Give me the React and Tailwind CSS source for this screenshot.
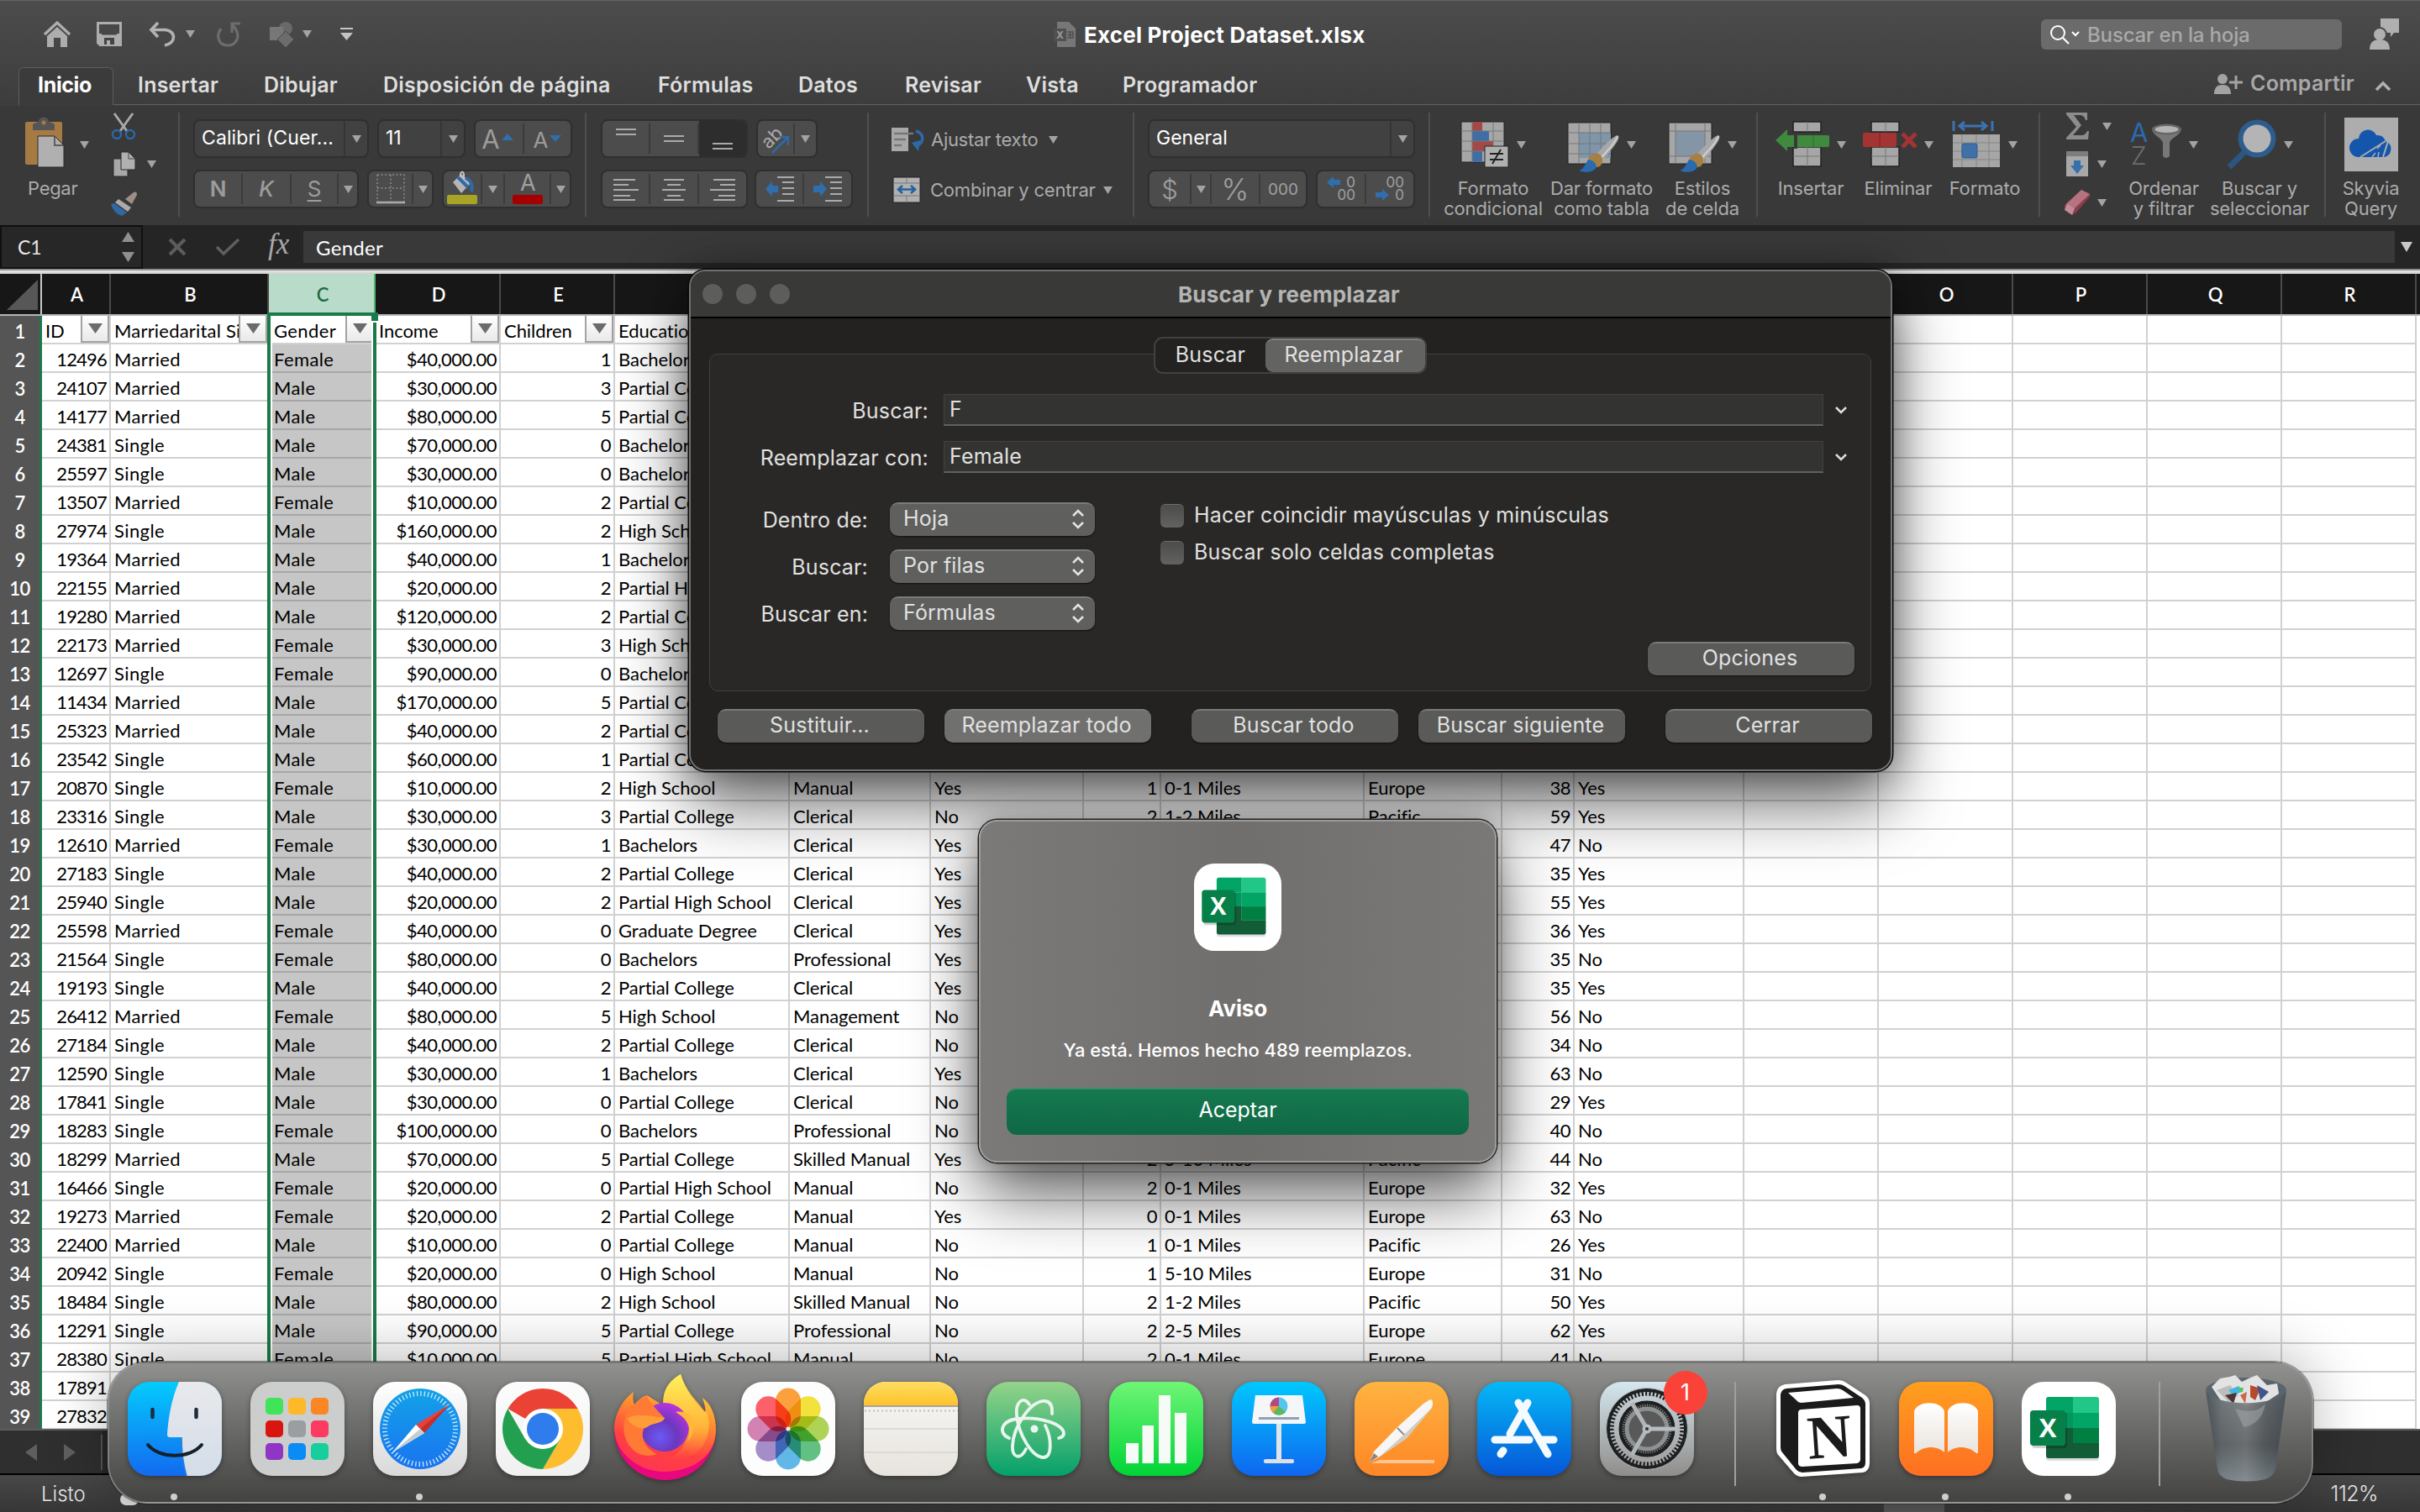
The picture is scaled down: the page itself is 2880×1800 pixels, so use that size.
import React from "react";

const COLS = [
  ["A", "w-[82px]"],
  ["B", "w-[188px]"],
  ["C", "w-[127px]"],
  ["D", "w-[149px]"],
  ["E", "w-[136px]"],
  ["F", "w-[208px]"],
  ["G", "w-[168px]"],
  ["H", "w-[182px]"],
  ["I", "w-[92px]"],
  ["J", "w-[242px]"],
  ["K", "w-[164px]"],
  ["L", "w-[86px]"],
  ["M", "w-[202px]"],
  ["N", "w-[160px]"],
  ["O", "w-[160px]"],
  ["P", "w-[160px]"],
  ["Q", "w-[160px]"],
  ["R", "w-[160px]"],
];
const RIGHT = new Set([0, 3, 4, 8, 11]);
const FILTERED = new Set([0, 1, 2, 3, 4]);

const DATA = `ID|Marriedarital Si|Gender|Income|Children|Educatio
12496|Married|Female|$40,000.00|1|Bachelors
24107|Married|Male|$30,000.00|3|Partial College
14177|Married|Male|$80,000.00|5|Partial College
24381|Single|Male|$70,000.00|0|Bachelors
25597|Single|Male|$30,000.00|0|Bachelors
13507|Married|Female|$10,000.00|2|Partial College
27974|Single|Male|$160,000.00|2|High School
19364|Married|Male|$40,000.00|1|Bachelors
22155|Married|Male|$20,000.00|2|Partial High School
19280|Married|Male|$120,000.00|2|Partial College
22173|Married|Female|$30,000.00|3|High School
12697|Single|Female|$90,000.00|0|Bachelors
11434|Married|Male|$170,000.00|5|Partial College
25323|Married|Male|$40,000.00|2|Partial College
23542|Single|Male|$60,000.00|1|Partial College
20870|Single|Female|$10,000.00|2|High School|Manual|Yes|1|0-1 Miles|Europe|38|Yes
23316|Single|Male|$30,000.00|3|Partial College|Clerical|No|2|1-2 Miles|Pacific|59|Yes
12610|Married|Female|$30,000.00|1|Bachelors|Clerical|Yes||||47|No
27183|Single|Male|$40,000.00|2|Partial College|Clerical|Yes||||35|Yes
25940|Single|Male|$20,000.00|2|Partial High School|Clerical|Yes||||55|Yes
25598|Married|Female|$40,000.00|0|Graduate Degree|Clerical|Yes||||36|Yes
21564|Single|Female|$80,000.00|0|Bachelors|Professional|Yes||||35|No
19193|Single|Male|$40,000.00|2|Partial College|Clerical|Yes||||35|Yes
26412|Married|Female|$80,000.00|5|High School|Management|No||||56|No
27184|Single|Male|$40,000.00|2|Partial College|Clerical|No||||34|No
12590|Single|Male|$30,000.00|1|Bachelors|Clerical|Yes||||63|No
17841|Single|Male|$30,000.00|0|Partial College|Clerical|No||||29|Yes
18283|Single|Female|$100,000.00|0|Bachelors|Professional|No||||40|No
18299|Married|Male|$70,000.00|5|Partial College|Skilled Manual|Yes|2|5-10 Miles|Pacific|44|No
16466|Single|Female|$20,000.00|0|Partial High School|Manual|No|2|0-1 Miles|Europe|32|Yes
19273|Married|Female|$20,000.00|2|Partial College|Manual|Yes|0|0-1 Miles|Europe|63|No
22400|Married|Male|$10,000.00|0|Partial College|Manual|No|1|0-1 Miles|Pacific|26|Yes
20942|Single|Female|$20,000.00|0|High School|Manual|No|1|5-10 Miles|Europe|31|No
18484|Single|Male|$80,000.00|2|High School|Skilled Manual|No|2|1-2 Miles|Pacific|50|Yes
12291|Single|Male|$90,000.00|5|Partial College|Professional|No|2|2-5 Miles|Europe|62|Yes
28380|Single|Female|$10,000.00|5|Partial High School|Manual|No|2|0-1 Miles|Europe|41|No
17891
27832`
  .split("\n")
  .map((l) => l.split("|"));

const Svg = ({ w, h, children, className = "" }) => (
  <svg width={w} height={h} viewBox={`0 0 ${w} ${h}`} className={`block shrink-0 overflow-visible ${className}`} fill="none">
    {children}
  </svg>
);
const Caret = ({ className = "", fill = "#a3a3a3" }) => (
  <Svg w={11} h={9} className={className}>
    <path d="M0 0H11L5.5 9Z" fill={fill} />
  </Svg>
);

/* ---------- title bar ---------- */
function TitleBar() {
  return (
    <header className="h-[125px] shrink-0 bg-linear-to-b from-[#4c4c4c] to-[#3d3d3d] border-t border-[#636363] flex flex-col">
      <div className="h-[79px] flex items-center shrink-0">
        <div className="w-[1254px] pl-[52px] flex items-center shrink-0">
          <Svg w={32} h={32}>
            <path d="M1 16L16 2L31 16" stroke="#adadad" strokeWidth="3.4" />
            <path d="M4 18L16 7L28 18V31H20V20H12V31H4Z" fill="#adadad" />
          </Svg>
          <Svg w={30} h={29} className="ml-[31px]">
            <path d="M1.5 1.5H28.5V27.5H4L1.5 25Z" stroke="#adadad" strokeWidth="3" />
            <path d="M2 14H28V28H4L2 26Z" fill="#adadad" />
            <path d="M9 27V19H21V27H16V22H12V27Z" fill="#444" />
            <path d="M6 14H24V15.5H6Z" fill="#444" />
          </Svg>
          <Svg w={33} h={30} className="ml-[32px]">
            <path d="M11 1L3 9.500L11 18M3 9.500H19C33 10 33 26 19 28" stroke="#b2b2b2" strokeWidth="3.6" />
          </Svg>
          <Caret className="ml-[11px]" />
          <Svg w={30} h={30} className="ml-[25px]">
            <path d="M6 8C-1 18 4 28 14 28C25 28 29 17 23 8L20 4M19 13V2H29" stroke="#6d6d6d" strokeWidth="3.2" />
          </Svg>
          <Svg w={30} h={30} className="ml-[34px]">
            <circle cx="19" cy="8" r="8" fill="#696969" />
            <path d="M0 6H16V22H0Z" fill="#777" />
            <path d="M19 11L29 21L19 31L9 21Z" fill="#6c6c6c" stroke="#444" />
          </Svg>
          <Caret className="ml-[9px]" />
          <Svg w={15} h={15} className="ml-[34px]">
            <path d="M0 1H15" stroke="#c4c4c4" strokeWidth="2" />
            <path d="M0 6H15L7.500 15Z" fill="#c4c4c4" />
          </Svg>
        </div>
        <div className="w-[1175px] flex items-center shrink-0">
          <Svg w={28} h={30}>
            <path d="M4 0H18L26 8V30H4Z" fill="#777" />
            <path d="M0 8H15V23H0Z" fill="#505050" />
            <text x="3" y="20" fontSize="12" fontWeight="700" fill="#999" fontFamily="Inter">X</text>
            <path d="M16 12H23V19H16M16 15.500H23M19.500 12V19" stroke="#505050" strokeWidth="1.500" />
          </Svg>
          <span className="ml-[8px] mt-[2px] text-[26px] font-bold text-white tracking-[0.2px] whitespace-nowrap">Excel Project Dataset.xlsx</span>
        </div>
        <div className="w-[358px] h-9 rounded-md bg-[#6b6b6b] flex items-center shrink-0 pl-[10px]">
          <Svg w={24} h={24}>
            <circle cx="10" cy="10" r="8" stroke="#fff" strokeWidth="2" />
            <path d="M16 16L23 23" stroke="#fff" strokeWidth="2.200" />
          </Svg>
          <Svg w={10} h={7} className="ml-[2px]">
            <path d="M1 1L5 5L9 1" stroke="#fff" strokeWidth="2" />
          </Svg>
          <span className="ml-[9px] mt-[2px] text-[24px] font-medium text-[#a9a9a9] tracking-[-0.15px] whitespace-nowrap">Buscar en la hoja</span>
        </div>
        <Svg w={35} h={37} className="ml-[33px]">
          <path d="M13 0H35V17H29L25 22V17H13Z" fill="#b0b0b0" />
          <circle cx="12" cy="19" r="8" fill="#b0b0b0" stroke="#474747" strokeWidth="2" />
          <path d="M0 37C0 29 4 25 12 25C20 25 24 29 24 37Z" fill="#b0b0b0" />
        </Svg>
      </div>
      <nav className="h-[45px] shrink-0 flex items-stretch pl-[22px] text-[25px] font-semibold text-[#dedede] whitespace-nowrap">
        <div className="w-[113px] -mb-px pb-[3px] pr-[3px] rounded-t-md border border-b-0 border-[#5c5c5c] bg-[#3b3b3b] flex justify-center items-center text-white font-bold tracking-[-0.4px]">Inicio</div>
        <div className="flex items-center gap-[55px] pl-[29px] border-b border-[#606060] grow tracking-[0.22px]">
          <span className="w-[95px]">Insertar</span>
          <span className="w-[87px]">Dibujar</span>
          <span className="w-[272px]">Disposición de página</span>
          <span className="w-[112px]">Fórmulas</span>
          <span className="w-[72px]">Datos</span>
          <span className="w-[89px]">Revisar</span>
          <span className="w-[60px]">Vista</span>
          <span className="w-[162px]">Programador</span>
          <div className="ml-auto mr-[34px] flex items-center text-[#a8a8a8] mb-1">
            <Svg w={34} h={24}>
              <circle cx="10" cy="6" r="6" fill="#a3a3a3" />
              <path d="M0 24C0 16 4 13 10 13C16 13 20 16 20 24ZM24.500 2H27.500V8.500H34V11.500H27.500V18H24.500V11.500H18V8.500H24.500Z" fill="#a3a3a3" />
            </Svg>
            <span className="w-[124px] ml-[9px]">Compartir</span>
            <Svg w={20} h={12} className="ml-[24px] mt-1">
              <path d="M2 11L10 3L18 11" stroke="#b0b0b0" strokeWidth="3.500" />
            </Svg>
          </div>
        </div>
      </nav>
    </header>
  );
}

/* ---------- ribbon ---------- */
const Box = ({ w, children, dark }) => (
  <div className={`${w} ${dark ? "bg-[#414141]" : "bg-[#4c4c4c]"} h-[46px] shrink-0 rounded-lg border-2 border-[#2f2f2f] flex items-stretch`}>
    {children}
  </div>
);
const Seg = ({ w, children, last, active }) => (
  <div className={`${w} ${active ? "bg-[#2d2d2d] rounded-r-md" : ""} flex items-center shrink-0`}>
    <div className="flex-1 flex items-center justify-center leading-none">{children}</div>
    {!last && <div className="w-[2px] h-9 bg-[#3b3b3b]" />}
  </div>
);
const Group = ({ w, children, last }) => (
  <div className={`${w} h-[142px] shrink-0 flex`}>
    <div className="flex grow min-w-0">{children}</div>
    {!last && <div className="w-[2px] h-[124px] mt-[8px] bg-[#4f4f4f] shrink-0" />}
  </div>
);
const Big = ({ w, icon, a, b, noCaret }) => (
  <div className={`${w} shrink-0 flex flex-col items-center pt-[11px]`}>
    <div className="h-[70px] flex items-center gap-[9px]">
      {icon}
      {!noCaret && <Caret />}
    </div>
    <div className="mt-[5px] text-center text-[22px] leading-6 text-[#ababab] tracking-[-0.15px] whitespace-nowrap">
      <div>{a}</div>
      <div>{b}</div>
    </div>
  </div>
);

const HLines = ({ rows, h = 32 }) => (
  <Svg w={30} h={h}>
    {rows.map(([x, w, y], i) => (
      <rect key={i} x={x} y={y} width={w} height="2" fill="#aaa" />
    ))}
  </Svg>
);
const Brush = () => (
  <g>
    <path d="M60 17C64 19 60 26 42 47L34 40C44 29 55 18 60 17Z" fill="#a8a8a8" />
    <path d="M60 18C58 24 48 36 39 45" stroke="#d0d0d0" strokeWidth="2" />
    <path d="M33 39C38 37 43 43 42 48C41 55 36 56 32 54L25 47C26 43 29 40 33 39Z" fill="#a87f42" />
    <path d="M25 46C30 46 35 50 35 55C31 62 21 62 14 59C20 58 22 50 25 46Z" fill="#2a6aad" />
  </g>
);
const GridIcon = ({ fill }) => (
  <g>
    <path d="M1 2H52V51H1Z" fill="#a6a6a6" stroke="#222" />
    {fill}
  </g>
);

function Ribbon() {
  return (
    <section className="h-[143px] shrink-0 bg-[#393939] border-t border-[#3d3d3d] flex">
      <Group w="w-[214px]">
        <div className="w-[125px] pt-[14px] pl-[30px] shrink-0">
          <div className="flex items-center">
            <Svg w={48} h={60}>
              <path d="M2 5H42Q44 5 44 7V56H2Q0 56 0 54V7Q0 5 2 5Z" fill="#a57b43" />
              <path d="M9 15V8Q12 6 16 5C16 -2 28 -2 28 5Q32 6 35 8V15Z" fill="#555" />
              <circle cx="22" cy="6" r="2.500" fill="#a57b43" />
              <path d="M15 22H35L46 33V59H15Z" fill="#b0b0b0" stroke="#2a2a2a" />
              <path d="M35 22V33H46" stroke="#444" strokeWidth="1.500" />
            </Svg>
            <Caret className="ml-[17px] mt-1" />
          </div>
          <div className="mt-[12px] ml-[3px] text-[22px] leading-6 text-[#ababab] tracking-[-0.3px]">Pegar</div>
        </div>
        <div className="pt-[8px] pl-[7px] flex flex-col">
          <Svg w={30} h={32}>
            <path d="M4 1L19 22M26 1L11 22" stroke="#a8a8a8" strokeWidth="3" />
            <circle cx="7" cy="26" r="5" stroke="#2b67a8" strokeWidth="2.400" />
            <circle cx="23" cy="26" r="5" stroke="#2b67a8" strokeWidth="2.400" />
          </Svg>
          <div className="flex items-center mt-[14px]">
            <Svg w={30} h={31} className="ml-[2px]">
              <path d="M1 9H18V30H1Z" fill="#a8a8a8" stroke="#2a2a2a" />
              <path d="M10 1H19L27 9V22H10Z" fill="#b0b0b0" stroke="#2a2a2a" />
              <path d="M19 1V9H27" stroke="#444" />
            </Svg>
            <Caret className="ml-[11px]" />
          </div>
          <Svg w={32} h={30} className="mt-[17px]">
            <path d="M17 9L27 1Q31 -1 31 4L25 15Z" fill="#9d8f86" />
            <path d="M9 9L24 19L20 24L5 13Z" fill="#aaa" />
            <path d="M4 14L19 25L13 29Q4 27 0 15Z" fill="#2f68a3" />
          </Svg>
        </div>
      </Group>
      <Group w="w-[484px]">
        <div className="pl-[16px] pt-[16px] flex flex-col gap-[14px] text-[#9c9c9c] text-[26px]">
          <div className="flex gap-[10px]">
            <Box w="w-[209px]" dark>
              <div className="w-[177px] flex items-center pl-[8px] pb-[2px] text-white text-[23px] tracking-[0.1px] whitespace-nowrap">Calibri (Cuer...</div>
              <div className="w-[2px] bg-[#353535]" />
              <Caret className="m-auto" />
            </Box>
            <Box w="w-[105px]" dark>
              <div className="w-[73px] flex items-center pl-[8px] pb-[2px] text-white text-[23px]">11</div>
              <div className="w-[2px] bg-[#353535]" />
              <Caret className="m-auto" />
            </Box>
            <Box w="w-[117px]">
              <Seg w="w-[58px]">
                <span className="text-[31px] mr-[2px] -ml-1">A</span>
                <Svg w={14} h={8} className="mb-1"><path d="M0 8H14L7 0Z" fill="#2f6fae" /></Svg>
              </Seg>
              <Seg w="w-[55px]" last>
                <span className="text-[26px] mt-1 mr-[2px]">A</span>
                <Svg w={14} h={8}><path d="M0 0H14L7 8Z" fill="#2f6fae" /></Svg>
              </Seg>
            </Box>
          </div>
          <div className="flex gap-[10px]">
            <Box w="w-[197px]">
              <Seg w="w-[57px]"><span className="font-semibold">N</span></Seg>
              <Seg w="w-[58px]"><span className="italic font-medium">K</span></Seg>
              <Seg w="w-[56px]"><span className="underline decoration-2 underline-offset-4">S</span></Seg>
              <Seg w="w-[22px]" last><Caret /></Seg>
            </Box>
            <Box w="w-[79px]">
              <Seg w="w-[53px]">
                <Svg w={34} h={36}>
                  <path d="M1 1H33V33M1 1V33M17 1V33M1 17H33" stroke="#8a8a8a" strokeWidth="1.500" strokeDasharray="2 2.500" />
                  <path d="M0 34H34" stroke="#aaa" strokeWidth="2.500" />
                </Svg>
              </Seg>
              <Seg w="w-[22px]" last><Caret /></Seg>
            </Box>
            <Box w="w-[154px]">
              <Seg w="w-[46px]">
                <Svg w={36} h={36}>
                  <path d="M7 10L17 0L28 11L17 23Z" fill="#b5b5b5" />
                  <path d="M16 11V0Q18 -5 20 0V6" stroke="#c4c4c4" strokeWidth="2" />
                  <path d="M13 4L25 16M22 5Q32 9 29 21" stroke="#2e6aa8" strokeWidth="4" />
                  <rect x="0" y="25" width="36" height="11" rx="2" fill="#a7a426" />
                </Svg>
              </Seg>
              <Seg w="w-[27px]"><Caret /></Seg>
              <Seg w="w-[55px]">
                <Svg w={36} h={36}>
                  <text x="9" y="20" fontSize="27" fill="#a0a0a0" fontFamily="Inter">A</text>
                  <rect x="0" y="25" width="36" height="11" rx="2" fill="#a40000" />
                </Svg>
              </Seg>
              <Seg w="w-[22px]" last><Caret /></Seg>
            </Box>
          </div>
        </div>
      </Group>
      <Group w="w-[336px]">
        <div className="pl-[17px] pt-[16px] flex flex-col gap-[14px]">
          <div className="flex gap-[10px]">
            <Box w="w-[175px]">
              <Seg w="w-[57px]"><HLines rows={[[3, 24, 4], [3, 24, 10]]} /></Seg>
              <Seg w="w-[58px]"><HLines rows={[[3, 24, 12], [3, 24, 18]]} /></Seg>
              <Seg w="w-[56px]" last active><div className="h-[42px] flex items-center"><HLines rows={[[3, 24, 21], [3, 24, 27]]} /></div></Seg>
            </Box>
            <Box w="w-[73px]">
              <Seg w="w-[44px]">
                <Svg w={36} h={36}>
                  <text x="3" y="25" fontSize="22" fill="#aaa" fontFamily="Inter" transform="rotate(-45 14 20)">ab</text>
                  <path d="M14 35L32 17M23 16H33V26" stroke="#2e6aa8" strokeWidth="2.500" />
                </Svg>
              </Seg>
              <Seg w="w-[25px]" last><Caret /></Seg>
            </Box>
          </div>
          <div className="flex gap-[8px]">
            <Box w="w-[175px]">
              <Seg w="w-[57px]"><HLines rows={[[0, 26, 6], [0, 18, 12], [0, 30, 18], [0, 20, 25], [0, 26, 30]]} h={36} /></Seg>
              <Seg w="w-[58px]"><HLines rows={[[3, 24, 6], [7, 16, 12], [1, 28, 18], [7, 16, 25], [3, 24, 30]]} h={36} /></Seg>
              <Seg w="w-[56px]" last><HLines rows={[[4, 26, 6], [12, 18, 12], [0, 30, 18], [10, 20, 25], [4, 26, 30]]} h={36} /></Seg>
            </Box>
            <Box w="w-[117px]">
              <Seg w="w-[57px]">
                <Svg w={34} h={36}>
                  <path d="M0 18L8 9V14H15V22H8V27Z" fill="#2f6fae" />
                  <path d="M14 4H34M20 10H34M20 17H34M20 24H34M14 32H34" stroke="#aaa" strokeWidth="2" />
                </Svg>
              </Seg>
              <Seg w="w-[56px]" last>
                <Svg w={34} h={36}>
                  <path d="M16 18L8 9V14H0V22H8V27Z" fill="#2f6fae" />
                  <path d="M14 4H34M20 10H34M20 17H34M20 24H34M14 32H34" stroke="#aaa" strokeWidth="2" />
                </Svg>
              </Seg>
            </Box>
          </div>
        </div>
      </Group>
      <Group w="w-[316px]">
        <div className="pl-[27px] pt-[17px] flex flex-col gap-[14px] text-[22px] text-[#ababab] whitespace-nowrap">
          <div className="h-[46px] flex items-center">
            <Svg w={40} h={30}>
              <path d="M0 1H20V29H0Z" fill="#a8a8a8" />
              <path d="M3 8H26M3 15H17M3 22H12" stroke="#777" strokeWidth="2.500" />
              <path d="M29 5C39 8 39 18 31 22" stroke="#2e6aa8" strokeWidth="3.500" />
              <path d="M24 19L34 16L32 29Z" fill="#2e6aa8" />
            </Svg>
            <span className="w-[127px] ml-[7px] tracking-[-0.3px]">Ajustar texto</span>
            <Caret className="ml-[13px]" />
          </div>
          <div className="h-[46px] flex items-center">
            <Svg w={34} h={32} className="ml-[1px]">
              <path d="M1 1H33V31H1Z" fill="#b0b0b0" stroke="#222" />
              <path d="M1 8H33M1 23H33M17 1V8M17 23V31" stroke="#777" />
              <path d="M9 15.500H25M12 11L7 15.500L12 20M22 11L27 15.500L22 20" stroke="#25619e" strokeWidth="2.600" />
            </Svg>
            <span className="w-[193px] ml-[11px] tracking-[-0.2px]">Combinar y centrar</span>
            <Caret className="ml-[13px]" />
          </div>
        </div>
      </Group>
      <Group w="w-[352px]">
        <div className="pl-[16px] pt-[16px] flex flex-col gap-[14px] text-[#a0a0a0]">
          <Box w="w-[318px]" dark>
            <div className="w-[286px] flex items-center pl-[8px] pb-[2px] text-white text-[23px]">General</div>
            <div className="w-[2px] bg-[#353535]" />
            <Caret className="m-auto" />
          </Box>
          <div className="flex gap-[10px]">
            <Box w="w-[190px]">
              <Seg w="w-[50px]"><span className="text-[31px] font-light">$</span></Seg>
              <Seg w="w-[24px]"><Caret /></Seg>
              <Seg w="w-[58px]"><span className="text-[35px] font-light">%</span></Seg>
              <Seg w="w-[54px]" last><span className="text-[19px]">000</span></Seg>
            </Box>
            <Box w="w-[118px]">
              <Seg w="w-[58px]">
                <div className="w-[34px] text-[17px] leading-[15px] flex flex-col items-end">
                  <div className="w-full flex justify-between"><Svg w={16} h={14}><path d="M0 7L8 0V4H16V10H8V14Z" fill="#2f6fae" /></Svg>0</div>
                  <div>00</div>
                </div>
              </Seg>
              <Seg w="w-[56px]" last>
                <div className="w-[34px] text-[17px] leading-[15px] flex flex-col items-end">
                  <div>00</div>
                  <div className="w-full flex justify-between"><Svg w={16} h={14}><path d="M16 7L8 0V4H0V10H8V14Z" fill="#2f6fae" /></Svg>0</div>
                </div>
              </Seg>
            </Box>
          </div>
        </div>
      </Group>
      <Group w="w-[390px]">
        <div className="flex pl-[11px]">
          <Big w="w-[128px]" a="Formato" b="condicional" icon={
            <Svg w={58} h={56}>
              <path d="M1 1H52V49H1Z" fill="#a6a6a6" stroke="#222" />
              <path d="M14 1H26V12H14ZM14 24H39V36H14Z" fill="#a34a48" />
              <path d="M14 12H34V24H14ZM14 36H26V49H14Z" fill="#3f6ea6" />
              <path d="M1 12H52M1 24H52M1 36H52M14 1V49M39 1V36" stroke="#777" strokeWidth="1" />
              <path d="M29 30H57V55H29Z" fill="#b0b0b0" stroke="#222" />
              <path d="M35 39H51M35 46H51M48 34L38 51" stroke="#222" strokeWidth="2" />
            </Svg>} />
          <Big w="w-[130px]" a="Dar formato" b="como tabla" icon={
            <Svg w={62} h={56}>
              <GridIcon fill={<><path d="M14 14H52V44H14Z" fill="#7f95a9" /><path d="M1 14H52M1 27H52M1 39H52M14 2V51M27 2V51M40 2V51" stroke="#777" /></>} />
              <Brush />
            </Svg>} />
          <Big w="w-[110px]" a="Estilos" b="de celda" icon={
            <Svg w={62} h={56}>
              <GridIcon fill={<><path d="M9 12H44V42H9Z" fill="#8496a6" /><path d="M1 12H52M1 42H52M9 2V51M44 2V51" stroke="#777" /></>} />
              <Brush />
            </Svg>} />
        </div>
      </Group>
      <Group w="w-[336px]">
        <div className="flex pl-[11px]">
          <Big w="w-[104px]" a="Insertar" icon={
            <Svg w={64} h={56}>
              <path d="M21 1H54V13H21ZM21 31H54V54H21Z" fill="#a6a6a6" stroke="#222" strokeWidth="1.500" />
              <path d="M38 1V13M38 31V54M21 42H54" stroke="#777" />
              <path d="M0 23L14 10V17H62Q64 17 64 19V29Q64 31 62 31H14V36Z" fill="#3f8a3f" />
              <path d="M24 14V33" stroke="#393939" strokeWidth="4" /><path d="M45 17V31" stroke="#2f6e30" />
            </Svg>} />
          <Big w="w-[104px]" a="Eliminar" icon={
            <Svg w={64} h={56}>
              <path d="M10 1H43V13H10ZM10 31H43V54H10Z" fill="#a6a6a6" stroke="#222" strokeWidth="1.500" />
              <path d="M27 1V13M27 31V54M10 42H43" stroke="#777" />
              <rect x="0" y="14" width="40" height="17" rx="2" fill="#a33433" />
              <path d="M20 14V31" stroke="#7d2423" />
              <path d="M47 15L63 31M63 15L47 31" stroke="#a33433" strokeWidth="5" />
            </Svg>} />
          <Big w="w-[102px]" a="Formato" icon={
            <Svg w={58} h={56}>
              <path d="M2 0V12M48 0V12M10 6H40M15 1L9 6L15 11M35 1L41 6L35 11" stroke="#3a74b0" strokeWidth="3" />
              <path d="M1 16H57V55H1Z" fill="#a6a6a6" />
              <path d="M1 26H57M1 36H57M1 46H57M12 16V55M29 16V55M44 16V55" stroke="#858585" />
              <rect x="12" y="27" width="18" height="17" rx="2" fill="#3f70a8" stroke="#2f5d91" />
            </Svg>} />
        </div>
      </Group>
      <Group w="w-[340px]">
        <div className="w-[93px] shrink-0 pl-[31px] pt-[8px] flex flex-col">
          <div className="flex items-start">
            <Svg w={28} h={33}>
              <path d="M0 0H25V9H23Q22 4 17 3H9L18 15L8 27H18Q23 27 25 22H27L26 32H0V30L12 17L0 2Z" fill="#8c8c8c" />
            </Svg>
            <Caret className="ml-[15px] mt-[12px]" />
          </div>
          <div className="flex items-center mt-[13px]">
            <Svg w={27} h={31}>
              <path d="M0 0H26V30H0Z" fill="#a8a8a8" /><path d="M0 0H26V6H0Z" fill="#7d7d7d" />
              <path d="M9 11H17V17H21L13 27L5 17H9Z" fill="#3a70a9" />
            </Svg>
            <Caret className="ml-[10px]" />
          </div>
          <div className="flex items-center mt-[14px] -ml-[3px]">
            <Svg w={32} h={32}>
              <path d="M21 1L31 6Q32 7 31 9L15 28L10 31L1 24V19Z" fill="#8d3c50" />
              <path d="M21 1L31 6L13 23L4 17Z" fill="#b5727f" />
              <path d="M4 17L13 23L10 31L1 25Z" fill="#c08c96" />
            </Svg>
            <Caret className="ml-[8px]" />
          </div>
        </div>
        <Big w="w-[108px]" a="Ordenar" b="y filtrar" icon={
          <Svg w={61} h={52}>
            <path d="M26 7C26 15 38 18 39 24V40Q43 44 47 40V24C48 18 61 15 61 7Z" fill="#777" />
            <ellipse cx="43.500" cy="8" rx="17.500" ry="6.500" fill="#666" />
            <ellipse cx="43.500" cy="8" rx="14" ry="4" fill="#b4b4b4" />
            <text x="0" y="23" fontSize="31" fill="#2a6bb0" fontFamily="Inter">A</text>
            <text x="1" y="50" fontSize="30" fill="#6c6c6c" fontFamily="Inter" fontWeight="300">Z</text>
          </Svg>} />
        <Big w="w-[120px]" a="Buscar y" b="seleccionar" icon={
          <Svg w={59} h={60}>
            <circle cx="36" cy="23" r="19.500" fill="#b4b4b4" stroke="#2c5d8e" strokeWidth="6" />
            <path d="M22 38L3 57" stroke="#2c5580" strokeWidth="7" />
          </Svg>} />
      </Group>
      <Group w="w-[112px]" last>
        <Big noCaret w="w-[107px]" a="Skyvia" b="Query" icon={
          <Svg w={64} h={64}>
            <path d="M0 0H64V64H0Z" fill="#adadad" />
            <path d="M17 47A11 11 0 0 1 17 25A11 11 0 0 1 38 21Q46 20 49 28A10 10 0 0 1 48 47Z" fill="#1556ad" />
            <path d="M19 47L49 28M46 47L52 28" stroke="#adadad" strokeWidth="2" />
            <path d="M33 47L37 42M39 37L43 33M40 47L41 41" stroke="#adadad" strokeWidth="1.500" />
          </Svg>} />
      </Group>
    </section>
  );
}

function FormulaBar() {
  return (
    <section className="h-[52px] shrink-0 bg-[#252525] flex items-center">
      <div className="w-[170px] h-full border-2 border-[#101010] bg-[#272727] flex items-center justify-between pl-[19px] pr-[8px] font-['Lato',sans-serif]">
        <span className="text-[23px] text-[#e8e8e8]">C1</span>
        <Svg w={15} h={36}>
          <path d="M0 12H15L7.500 0ZM0 24H15L7.500 36Z" fill="#8f8f8f" />
        </Svg>
      </div>
      <Svg w={22} h={20} className="ml-[30px]">
        <path d="M2 1L20 19M20 1L2 19" stroke="#5c5c5c" strokeWidth="4" />
      </Svg>
      <Svg w={30} h={20} className="ml-[34px]">
        <path d="M2 10L10 18L28 1" stroke="#5f5f5f" strokeWidth="3.500" />
      </Svg>
      <span className="w-[43px] pl-[1px] ml-[32px] -mt-[6px] font-['Liberation_Serif',serif] italic text-[35px] leading-[40px] text-[#a8a8a8]">fx</span>
      <div className="w-[2489px] h-[38px] bg-[#393939] pl-[15px] pt-[2px] flex items-center font-['Lato',sans-serif] text-[24px] tracking-[0.3px] text-white">Gender</div>
      <Svg w={14} h={12} className="ml-[7px]"><path d="M0 0H14L7 12Z" fill="#c9c9c9" /></Svg>
    </section>
  );
}

/* ---------- sheet ---------- */
function Filter() {
  return (
    <div className="absolute right-0 top-0 w-[34px] h-[32px] bg-linear-to-b from-white to-[#e9e9e9] border-2 border-t-0 border-[#a2a2a2] flex items-center justify-center">
      <Svg w={17} h={12}><path d="M0 0H17L8.500 12Z" fill="#6b6b6b" /></Svg>
    </div>
  );
}

const cellText = (r, i) => {
  if (r > 0 && RIGHT.has(i)) {
    return i === 0 ? "justify-end pr-[3px] tracking-[-0.8px]" : "justify-end pr-[3px] tracking-[-0.5px]";
  }
  if (i === 2) return "pl-[6px] tracking-[0.4px]";
  if (i === 1) return r === 0 ? "pl-[4px] tracking-[0.2px]" : "pl-[4px] tracking-[0.4px]";
  return "pl-[4px] tracking-[-0.05px]";
};

function Sheet() {
  return (
    <section className="relative h-[1381px] shrink-0 overflow-hidden bg-white font-['Lato',sans-serif] text-[22px] text-black border-t-2 border-[#8e8e8e]">
      <div className="h-[4px] bg-linear-to-b from-[#e8e8e8] to-[#cfcfcf]" />
      <div className="flex h-[50px] bg-[#171717] border-b-2 border-[#b5b5b5] text-white font-semibold">
        <div className="w-[50px] shrink-0 border-r-2 border-[#c9c9c9] flex items-end justify-end pb-[5px] pr-[3px]">
          <Svg w={37} h={36}><path d="M37 0V36H0Z" fill="#575757" /></Svg>
        </div>
        {COLS.map(([c, w], i) => (
          <div key={c} className={`${w} shrink-0 flex items-center justify-center pl-[3px] border-r-2 ${i === 2 ? "bg-[#b9dbc9] text-[#1f6b42] border-[#4fb771]" : "border-[#4a4a4a]"}`}>{c}</div>
        ))}
      </div>
      {DATA.map((row, r) => (
        <div key={r} className="flex h-[34px]">
          <div className="w-[50px] shrink-0 bg-[#555] border-r-[3px] border-[#1b7a49] text-white font-semibold flex items-center justify-center pt-[2px] tracking-[-0.6px]">{r + 1}</div>
          {COLS.map(([c, w], i) => (
            <div
              key={c}
              className={`${w} relative shrink-0 border-r-2 border-b-2 flex items-center pt-[3px] whitespace-nowrap overflow-hidden ${cellText(r, i)} ${
                i === 2 && r > 0 ? "bg-[#c6c6c6] border-[#a6a6a6]" : "border-[#d1d1d1]"
              }`}
            >
              {row[i]}
              {r === 0 && FILTERED.has(i) && <Filter />}
            </div>
          ))}
        </div>
      ))}
      <div className="absolute left-[318px] top-[50px] w-[130px] h-[1340px] border-4 border-b-0 border-[#1b7a49]">
        <div className="w-full h-full border-x-2 border-white" />
      </div>
      <div className="absolute left-[442px] top-[50px] w-[8px] h-[12px] bg-[#1b7a49] border-b-2 border-white" />
    </section>
  );
}

function Bottom() {
  return (
    <footer className="grow flex flex-col">
      <div className="h-[53px] shrink-0 bg-[#2f2f2f] border-t-2 border-[#5d5d5d] flex items-center">
        <Svg w={60} h={20} className="ml-[30px]">
          <path d="M14 0V20L0 10ZM46 0V20L60 10Z" fill="#5f5f5f" />
        </Svg>
        <div className="w-[2px] h-[42px] ml-[30px] bg-[#555]" />
        <div className="grow self-stretch bg-[#262626] flex justify-end">
          <div className="w-[140px] bg-[#2f2f2f]" />
        </div>
      </div>
      <div className="grow border-t-2 border-black bg-linear-to-b from-[#484848] to-[#363636] flex items-center text-[24px] font-light text-[#e6e6e6] pl-[49px]">
        <span className="w-[94px] pt-[1px]">Listo</span>
        <div className="w-[22px] h-[14px] bg-[#ddd] rounded-full self-end mb-[8px]" />
        <div className="w-[72px] h-[12px] ml-[2077px] self-end bg-[#555]" />
        <span className="ml-auto mr-[50px] pt-[1px] text-[25px] tracking-[-0.5px]">112%</span>
      </div>
    </footer>
  );
}

/* ---------- find & replace ---------- */
const Btn = ({ w = "w-[246px]", className = "", children, hot }) => (
  <div className={`${w} ${className} ${hot ? "bg-[#70706f]" : "bg-[#5a5a59]"} h-10 shrink-0 rounded-[10px] border-t-2 border-t-[#7b7b7a] shadow-[0_1px_2px_rgba(0,0,0,0.6)] flex items-center justify-center pb-[3px] pr-[3px]`}>{children}</div>
);
const Field = ({ label, value }) => (
  <div className="flex items-center h-[38px]">
    <span className="w-[260px] text-right pt-[3px]">{label}</span>
    <div className="w-[1047px] h-full ml-[18px] bg-[#333331] border border-[#41413f] border-b-2 border-b-[#61615f] flex items-center pl-[6px]">{value}</div>
    <Svg w={16} h={10} className="ml-[13px]"><path d="M2 2L8 8L14 2" stroke="#dcdcdb" strokeWidth="2.500" /></Svg>
  </div>
);
const Popup = ({ label, value }) => (
  <div className="flex items-center h-10">
    <span className="w-[188px] text-right pt-[3px]">{label}</span>
    <div className="w-[244px] h-10 ml-[26px] rounded-[10px] bg-[#5f5f5e] border-t-2 border-t-[#7b7b7a] shadow-[0_1px_2px_rgba(0,0,0,0.6)] flex items-center justify-between pl-[16px] pr-[12px] pb-[3px]">
      {value}
      <Svg w={16} h={24}><path d="M2 8L8 2L14 8M2 16L8 22L14 16" stroke="#e4e4e3" strokeWidth="2.500" /></Svg>
    </div>
  </div>
);
const Check = ({ children }) => (
  <div className="flex items-center gap-[12px] h-7">
    <div className="size-7 rounded-[6px] bg-linear-to-b from-[#4c4c4b] to-[#626261] border-t border-[#6e6e6d]" />
    {children}
  </div>
);

function FindReplace() {
  return (
    <div className="absolute left-[820px] top-[321px] w-[1432px] h-[597px] rounded-[20px] bg-[#232220] border-2 border-[#71716f] shadow-[0_0_0_1.5px_#0a0a0a,0_36px_80px_rgba(0,0,0,0.62),0_0_40px_rgba(0,0,0,0.3)] overflow-hidden flex flex-col text-[25px] text-[#e1e1e0] tracking-[0.17px] whitespace-nowrap">
      <div className="h-[56px] shrink-0 bg-[#393937] border-b-2 border-black flex items-center">
        <div className="flex gap-[16px] pl-[14px] w-[580px] shrink-0">
          <div className="size-6 rounded-full bg-[#5d5d5b]" />
          <div className="size-6 rounded-full bg-[#5d5d5b]" />
          <div className="size-6 rounded-full bg-[#5d5d5b]" />
        </div>
        <span className="font-bold text-[26px] text-[#b4b4b2] tracking-[0.15px]">Buscar y reemplazar</span>
      </div>
      <div className="relative mt-[42px] ml-[22px] w-[1383px] h-[402px] shrink-0 rounded-[10px] border border-[#3f3f3d] bg-[#292826] pt-[47px]">
        <div className="absolute left-[528px] top-[-21px] w-[325px] h-[44px] rounded-[11px] bg-[#232220] border-2 border-[#41413f] flex">
          <div className="w-[131px] flex items-center justify-center">Buscar</div>
          <div className="w-[190px] rounded-[9px] bg-[#636361] border-t-2 border-[#80807e] flex items-center justify-center pr-1 pb-[2px]">Reemplazar</div>
        </div>
        <div className="flex flex-col gap-[18px]">
          <Field label="Buscar:" value="F" />
          <Field label="Reemplazar con:" value="Female" />
        </div>
        <div className="flex mt-[35px]">
          <div className="flex flex-col gap-4">
            <Popup label="Dentro de:" value="Hoja" />
            <Popup label="Buscar:" value="Por filas" />
            <Popup label="Buscar en:" value="Fórmulas" />
          </div>
          <div className="flex flex-col gap-4 ml-[78px] mt-[2px]">
            <Check>Hacer coincidir mayúsculas y minúsculas</Check>
            <Check>Buscar solo celdas completas</Check>
          </div>
        </div>
        <div className="flex justify-end mt-[14px] pr-[19px]">
          <Btn>Opciones</Btn>
        </div>
      </div>
      <div className="flex mt-[21px] pl-[32px]">
        <Btn>Sustituir...</Btn>
        <Btn hot className="ml-[24px]">Reemplazar todo</Btn>
        <Btn className="ml-[48px]">Buscar todo</Btn>
        <Btn className="ml-[24px]">Buscar siguiente</Btn>
        <Btn className="ml-[48px]">Cerrar</Btn>
      </div>
    </div>
  );
}

const ExcelIcon = ({ size }) => (
  <svg width={size} height={size} viewBox="0 0 112 112" className="block shrink-0" fill="none">
    <rect width="112" height="112" rx="26" fill="#fff" />
    <rect x="29" y="20" width="63" height="74" rx="3" fill="#ddd" />
    <path d="M32 18H61V37H29V21Q29 18 32 18ZM61 37H92V55H61Z" fill="#03a567" />
    <path d="M61 18H89Q92 18 92 21V37H61Z" fill="#21c787" />
    <path d="M29 37H61V55H29Z" fill="#02965e" />
    <path d="M61 55H92V73H61Z" fill="#007f43" />
    <path d="M29 55H61V73H92V88Q92 91 89 91H32Q29 91 29 88Z" fill="#125c37" />
    <rect x="12" y="36" width="42" height="43" rx="4" fill="#000" opacity=".18" />
    <rect x="10" y="34" width="42" height="42" rx="4" fill="#068048" />
    <text x="31" y="66" textAnchor="middle" fontSize="31" fontWeight="700" fill="#fff" fontFamily="Open Sans">X</text>
  </svg>
);

function Alert() {
  return (
    <div className="absolute left-[1165px] top-[976px] w-[616px] h-[408px] rounded-[22px] bg-linear-to-r from-[#7b7a78] via-[#716f6d] to-[#7a7977] border-2 border-[#9b9a98] shadow-[0_0_0_1.5px_#222,0_36px_80px_rgba(0,0,0,0.65),0_0_30px_rgba(0,0,0,0.25)] flex flex-col items-center text-white">
      <div className="mt-[50px]"><ExcelIcon size={104} /></div>
      <div className="mt-[51px] text-[26px] leading-9 font-bold tracking-[-0.2px]">Aviso</div>
      <div className="mt-[17px] text-[22px] leading-7 font-medium tracking-[-0.05px]">Ya está. Hemos hecho 489 reemplazos.</div>
      <div className="mt-[31px] w-[550px] h-[56px] rounded-[12px] bg-linear-to-b from-[#15794e] to-[#106746] border-t-2 border-[#3c8c69] flex items-center justify-center pb-[4px] text-[25px]">Aceptar</div>
    </div>
  );
}

/* ---------- dock ---------- */
const App112 = ({ children }) => (
  <svg width="112" height="112" viewBox="0 0 112 112" className="block shrink-0 overflow-visible drop-shadow-[0_2px_3px_rgba(0,0,0,0.35)]" fill="none">
    {children}
  </svg>
);
const Grad = ({ id, a, b, m }) => (
  <linearGradient id={id} x1="0" y1="0" x2="0" y2="1">
    <stop offset="0" stopColor={a} />
    {m && <stop offset=".5" stopColor={m} />}
    <stop offset="1" stopColor={b} />
  </linearGradient>
);
const Tile = ({ id }) => <rect width="112" height="112" rx="26" fill={`url(#${id})`} />;

const Finder = () => (
  <App112>
    <defs>
      <Grad id="fa" a="#04cbfd" b="#126af0" />
      <Grad id="fb" a="#e9e9ec" b="#d3dde8" />
      <clipPath id="fc"><rect width="112" height="112" rx="26" /></clipPath>
    </defs>
    <g clipPath="url(#fc)">
      <rect width="112" height="112" fill="url(#fa)" />
      <path d="M61 0C52 20 48 45 47 63Q47 66 50 66H64C64 82 66 98 70 112H112V0Z" fill="url(#fb)" />
      <path d="M64 66C64 82 66 98 70 112" stroke="#2a7fe0" strokeWidth="1.500" />
    </g>
    <path d="M29.500 33V42M81.500 33V42" stroke="#1d2d3c" strokeWidth="4.500" strokeLinecap="round" />
    <path d="M24 75C38 92 74 92 88 75" stroke="#15202c" strokeWidth="4" strokeLinecap="round" />
  </App112>
);
const PAD = ["#3fe45a", "#fdb92a", "#fb8724", "#d9150f", "#9a9ea0", "#fd3a62", "#9035c4", "#0a8cf6", "#17cf9c"];
const Launchpad = () => (
  <App112>
    <rect width="112" height="112" rx="26" fill="#cccdcd" />
    {PAD.map((c, i) => (
      <rect key={c} x={18 + (i % 3) * 27} y={19 + Math.floor(i / 3) * 27} width="21" height="20" rx="5" fill={c} />
    ))}
  </App112>
);
const Safari = () => (
  <App112>
    <defs><Grad id="sa" a="#fff" b="#d9d9da" /><Grad id="sb" a="#12a3e8" b="#1a73f0" /></defs>
    <Tile id="sa" />
    <circle cx="56" cy="56" r="48" fill="url(#sb)" />
    <circle cx="56" cy="56" r="42" stroke="#cfe9fb" strokeWidth="6" strokeDasharray="1.300 3.098" />
    <path d="M91 27L51 51L61 61Z" fill="#e8413a" />
    <path d="M91 27L56 56L61 61Z" fill="#c52f2a" />
    <path d="M23 84L51 51L61 61Z" fill="#fff" />
    <path d="M23 84L56 56L61 61Z" fill="#c9cdd0" />
  </App112>
);
const Chrome = () => (
  <App112>
    <defs><Grad id="ca" a="#fcfcfc" b="#f0f0f0" /></defs>
    <Tile id="ca" />
    <path d="M56 56L14.400 32A48 48 0 0 1 97.600 32H56Z" fill="#ea4335" />
    <path d="M56 32H97.600A48 48 0 0 1 56 104L76.800 68Z" fill="#fdbd2f" />
    <path d="M14.400 32A48 48 0 0 0 56 104L76.800 68L35 68Z" fill="#22a04f" />
    <circle cx="56" cy="56" r="24" fill="#fff" />
    <circle cx="56" cy="56" r="19" fill="#2f7ced" />
  </App112>
);
const Firefox = () => (
  <App112>
    <defs>
      <linearGradient id="ga" x1=".7" y1="0" x2=".4" y2="1">
        <stop offset="0" stopColor="#ffe94d" /><stop offset=".35" stopColor="#ff9a2e" /><stop offset=".75" stopColor="#ff3f42" /><stop offset="1" stopColor="#ff3750" />
      </linearGradient>
      <radialGradient id="gb" cx=".4" cy=".7" r=".7"><stop offset="0" stopColor="#6a5af5" /><stop offset=".5" stopColor="#6a38bf" /><stop offset="1" stopColor="#b634dc" /></radialGradient>
      <linearGradient id="gc" x1=".5" y1="0" x2=".5" y2="1"><stop offset="0" stopColor="#fff15a" /><stop offset=".6" stopColor="#ffb63a" /><stop offset="1" stopColor="#ff8a35" stopOpacity="0" /></linearGradient>
    </defs>
    <path d="M-5 56C-5 92 24 117 56 117C90 117 116 90 116 57Z" fill="#e8077c" />
    <path d="M18 12C6 20 -5 38 -5 56C-3 86 24 107 56 107C92 106 116 86 116 57C116 40 110 26 100 19C103 28 104 33 103 36C95 24 80 12 74 -9C58 0 53 12 53 28L34 16C28 18 23 22 19 27C17 22 17 17 18 12Z" fill="url(#ga)" />
    <path d="M74 -9C56 2 52 14 54 30C72 34 84 50 82 62C80 78 70 88 56 92C84 98 108 80 108 50C107 38 104 34 103 36C90 24 80 10 74 -9Z" fill="url(#gc)" />
    <circle cx="55" cy="54" r="29" fill="url(#gb)" />
    <path d="M19 27C8 36 4 50 8 66C14 84 30 92 46 86C32 80 26 68 30 56C36 48 50 50 55 43C48 36 38 26 34 17C27 20 22 23 19 27Z" fill="#ff7b35" />
    <path d="M11 44C18 38 34 40 55 43C53 50 42 48 34 54C28 58 14 52 11 44Z" fill="#ff9c3a" />
    <path d="M68 36C90 32 96 56 82 72C88 56 82 46 74 40Z" fill="#ffb83a" />
  </App112>
);
const PETALS = ["#fa9a2f", "#f3df2d", "#a9d04a", "#56bd78", "#55b3e6", "#9d84c4", "#cf78ad", "#fb5460"];
const Photos = () => (
  <App112>
    <rect width="112" height="112" rx="26" fill="#fdfdfd" />
    <g className="isolate">
      {PETALS.map((c, i) => (
        <rect key={c} x="41" y="7.500" width="30" height="47" rx="15" fill={c} opacity=".93" transform={`rotate(${i * 45} 56 56)`} className="mix-blend-multiply" />
      ))}
    </g>
    <circle cx="56" cy="56" r="2.500" fill="#eee" />
  </App112>
);
const Notes = () => (
  <App112>
    <defs><Grad id="na" a="#f8f8f7" b="#e7e3dd" /><Grad id="nb" a="#ffdc62" b="#fec32a" /><clipPath id="nc"><rect width="112" height="112" rx="26" /></clipPath></defs>
    <Tile id="na" />
    <g clipPath="url(#nc)">
      <rect width="112" height="28" fill="url(#nb)" />
      <path d="M0 29H112" stroke="#aaa59c" strokeWidth="2" />
      <path d="M1 34.500H112" stroke="#bcbcbc" strokeWidth="2" strokeDasharray="2 3" />
      <path d="M0 56H112M0 84H112" stroke="#d4d4d2" strokeWidth="1.500" />
    </g>
  </App112>
);
const Atom = () => (
  <App112>
    <defs><Grad id="aa" a="#95d48a" b="#04a06a" /></defs>
    <Tile id="aa" />
    <g stroke="#e9f6ee" strokeWidth="3.800" strokeLinecap="round">
      <path d="M27 67C14 62 16 46 38 44C62 41 92 50 92 62Q91 66 86 67" />
      <path d="M51 27C44 16 34 24 36 40C38 62 54 90 68 90C78 90 78 68 70 52" />
      <path d="M47 80C40 94 30 90 31 76C32 54 52 22 70 23Q79 24 78 38" />
    </g>
    <circle cx="57" cy="56" r="4.500" fill="#e9f6ee" />
  </App112>
);
const Numbers = () => (
  <App112>
    <defs><Grad id="ua" a="#6ff576" b="#00d437" /></defs>
    <Tile id="ua" />
    <path d="M20 73H35V97H20ZM39.500 52H53V97H39.500ZM59 16H73V97H59ZM78 37H92V97H78Z" fill="#f7fbf7" />
  </App112>
);
const Keynote = () => (
  <App112>
    <defs><Grad id="ka" a="#00c8fd" b="#0f66f0" /></defs>
    <Tile id="ka" />
    <path d="M53 50H59V94H53Z" fill="#dfe4ea" />
    <path d="M28 16H84L88 48Q88 50 86 50H26Q24 50 24 48Z" fill="#f5f6f8" />
    <path d="M32 42H80V45H32Z" fill="#8fa3b0" />
    <circle cx="56" cy="29" r="10.500" fill="#54c6ee" />
    <path d="M56 29L45.500 29A10.500 10.500 0 0 1 56 18.500Z" fill="#b64686" />
    <path d="M56 29L49 37A10.500 10.500 0 0 1 45.500 29Z" fill="#f59d35" />
    <path d="M56 29L64 36A10.500 10.500 0 0 1 49 37Z" fill="#5cb85a" />
    <rect x="38" y="92" width="36" height="5" rx="2" fill="#dcdfe3" />
  </App112>
);
const Pages = () => (
  <App112>
    <defs><Grad id="pa" a="#feb441" b="#fe8626" /></defs>
    <Tile id="pa" />
    <path d="M30 93H95V97H20Z" fill="#ffc48f" />
    <path d="M90 21Q95 21 92 31L62 67L30 89L18 96L23 83L52 53L82 26Z" fill="#f7f6f4" />
    <path d="M92 31L62 67L30 89L62 60Z" fill="#cfccc8" />
    <path d="M51 55L59 63" stroke="#8f8b88" strokeWidth="2" />
    <path d="M18 96L23 85L28 89Z" fill="#8a8580" />
  </App112>
);
const AppStore = () => (
  <App112>
    <defs><Grad id="ta" a="#05b8f6" b="#0557d8" /></defs>
    <Tile id="ta" />
    <g stroke="#f5faff" strokeWidth="9" strokeLinecap="round">
      <path d="M60 25L39 62M49 25L84 86M31 82L28 86" />
      <path d="M21 69H62M78 69H91" />
    </g>
  </App112>
);
const Settings = () => (
  <App112>
    <defs><Grad id="ea" a="#d5e7ef" b="#8f8d8a" /><Grad id="eb" a="#c2cdd2" b="#a3a3a2" /></defs>
    <Tile id="ea" />
    <circle cx="56" cy="56" r="48.500" fill="#1d1f20" stroke="#b5bcbf" strokeWidth="1" />
    <circle cx="56" cy="56" r="41.500" stroke="url(#eb)" strokeWidth="5" strokeDasharray="2.200 2.144" />
    <circle cx="56" cy="56" r="36.500" stroke="url(#eb)" strokeWidth="6" />
    <circle cx="56" cy="56" r="24" fill="#595959" stroke="#8d9192" strokeWidth="5" />
    <circle cx="56" cy="56" r="28" stroke="#777b7c" strokeWidth="3" strokeDasharray="1.300 1.500" />
    <path d="M56 56L38 25M56 56L38 87" stroke="#b0b6b8" strokeWidth="5" />
    <path d="M56 56H92" stroke="#b6bcbf" strokeWidth="5" />
    <circle cx="56" cy="56" r="5.500" fill="#b6bcbf" />
    <circle cx="56" cy="56" r="2" fill="#333" />
  </App112>
);
const Notion = () => (
  <App112>
    <path d="M10 3L73 -2Q79 -2 83 1L106 16Q111 20 111 26V97Q111 106 103 108L30 113Q25 113 21 109L3 88Q0 85 0 80V14Q1 5 10 3Z" fill="#fff" />
    <path d="M12 8L74 3Q78 3 81 5L102 19Q106 22 106 27V96Q106 102 101 103L31 108Q27 108 24 105L7 84Q5 82 5 78V15Q6 9 12 8Z" fill="#1b1b1b" />
    <path d="M14 13L72 8Q76 8 79 10L92 19L30 25Q26 25 24 22Z" fill="#fff" />
    <path d="M30 33L96 28Q100 28 100 32V92Q100 96 96 97L31 101Q26 101 26 97V37Q26 33 30 33Z" fill="#fff" />
    <text x="63" y="90" textAnchor="middle" fontSize="73" fontWeight="700" fill="#1b1b1b" fontFamily="Liberation Serif" transform="rotate(-4 63 66)">N</text>
  </App112>
);
const Books = () => (
  <App112>
    <defs><Grad id="ba" a="#ff9f1f" b="#fe6f22" /><Grad id="bb" a="#fff" b="#e9e3dd" /></defs>
    <Tile id="ba" />
    <path d="M18 35C22 22 50 22 54 35V84C46 77 32 75 20 85Q18 86 18 84ZM58 35C62 22 90 22 94 35V84Q94 86 92 85C80 75 66 77 58 84Z" fill="url(#bb)" />
  </App112>
);
const Trash = () => (
  <svg width="100" height="130" viewBox="0 0 100 130" className="block shrink-0" fill="none">
    <defs>
      <linearGradient id="tr" x1="0" y1="0" x2="1" y2="0">
        <stop offset="0" stopColor="#4d565c" /><stop offset=".2" stopColor="#727a7e" /><stop offset=".5" stopColor="#85898b" /><stop offset=".75" stopColor="#606669" /><stop offset="1" stopColor="#4c565c" />
      </linearGradient>
      <linearGradient id="ts" x1="0" y1="0" x2="0" y2="1">
        <stop offset="0" stopColor="#222" stopOpacity="0" /><stop offset=".6" stopColor="#222" stopOpacity=".25" /><stop offset="1" stopColor="#8fa3b0" stopOpacity=".3" />
      </linearGradient>
    </defs>
    <ellipse cx="49" cy="20" rx="48" ry="15" fill="#59656d" />
    <path d="M8 16L18 6L30 4L36 2L44 10L52 6L62 2L74 14L86 12L88 24L70 36L50 38L20 34Z" fill="#e3e3e3" />
    <path d="M14 20L30 14L40 26L28 34Z" fill="#bdbdbd" /><path d="M28 20L40 15L46 21L34 26Z" fill="#3fb7e8" />
    <path d="M38 17L46 17L44 23Z" fill="#58c64e" /><path d="M54 14L66 18L60 32L54 28Z" fill="#b54a31" />
    <path d="M62 14L76 22L66 32Z" fill="#41548c" /><path d="M24 26L38 23L34 36Z" fill="#4a3735" />
    <path d="M42 26L50 22L48 36Z" fill="#c76a4a" />
    <path d="M1 21C14 40 84 40 97 21L84 114Q82 122 72 126Q50 131 26 126Q16 122 15 114Z" fill="url(#tr)" opacity=".93" />
    <path d="M1 21C14 40 84 40 97 21L84 114Q82 122 72 126Q50 131 26 126Q16 122 15 114Z" fill="url(#ts)" />
    <path d="M36 42Q60 50 72 36Q68 60 46 64Z" fill="#a7aaab" opacity=".5" />
  </svg>
);

const Slot = ({ children, dot }) => (
  <div className="w-[112px] shrink-0 relative">
    {children}
    {dot && <div className="absolute left-[51px] top-[133px] size-2 rounded-full bg-[#cfcfce]" />}
  </div>
);

function Dock() {
  return (
    <div className="absolute left-[128px] top-[1621px] w-[2625px] h-[169px] rounded-[48px] border-2 border-[#9a9a99]/60 bg-linear-to-b from-[#91918f] via-[#6c6c6b] via-45% to-[#434342] shadow-[0_0_0_1px_rgba(20,20,20,0.45),0_-6px_70px_rgba(0,0,0,0.28)] flex items-start pl-[21.5px] pt-[22px] gap-[34px]">
      <Slot dot><Finder /></Slot>
      <Slot><Launchpad /></Slot>
      <Slot dot><Safari /></Slot>
      <Slot><Chrome /></Slot>
      <Slot><Firefox /></Slot>
      <Slot><Photos /></Slot>
      <Slot><Notes /></Slot>
      <Slot><Atom /></Slot>
      <Slot><Numbers /></Slot>
      <Slot><Keynote /></Slot>
      <Slot><Pages /></Slot>
      <Slot><AppStore /></Slot>
      <Slot>
        <Settings />
        <div className="absolute left-[76px] top-[-13px] size-[52px] rounded-full bg-[#fb4238] text-white text-[27px] flex items-center justify-center">1</div>
      </Slot>
      <div className="w-[2px] h-[124px] bg-[#a0a09f] ml-[14px] shrink-0" />
      <div className="ml-[14px] flex gap-[34px]">
        <Slot dot><Notion /></Slot>
        <Slot dot><Books /></Slot>
        <Slot dot><ExcelIcon size={112} /></Slot>
      </div>
      <div className="w-[2px] h-[124px] bg-[#a0a09f] ml-[17px] shrink-0" />
      <div className="ml-[19px] -mt-[10px]"><Trash /></div>
    </div>
  );
}

export default function App() {
  return (
    <div className="relative w-[2880px] h-[1800px] overflow-hidden bg-[#2b2b2b] flex flex-col font-['Inter',sans-serif]">
      <TitleBar />
      <Ribbon />
      <FormulaBar />
      <Sheet />
      <Bottom />
      <FindReplace />
      <Alert />
      <Dock />
    </div>
  );
}
